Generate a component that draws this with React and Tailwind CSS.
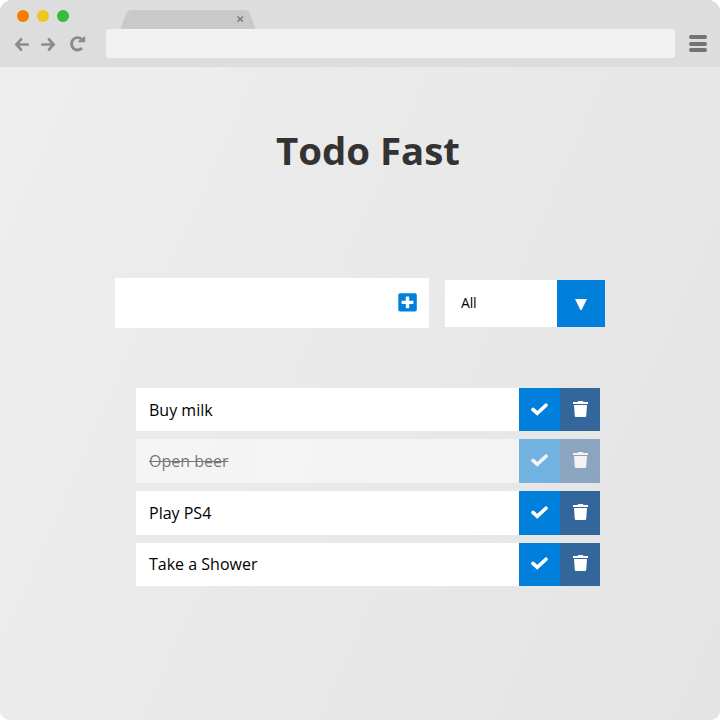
const todos = [
  { text: "Buy milk", done: false, height: "h-[43px] mb-2", nudge: "pb-px" },
  { text: "Open beer", done: true, height: "h-[44px] mb-2", nudge: "pb-[2px]" },
  { text: "Play PS4", done: false, height: "h-[44px] mb-2", nudge: "pb-[2px]" },
  { text: "Take a Shower", done: false, height: "h-[43px]", nudge: "pb-[3px]" },
];

function CheckIcon() {
  return (
    <svg className="h-[13px] w-[17px]" viewBox="0 0 17 13" fill="none">
      <path d="M2 6.400L6.200 10.400L15 2.200" stroke="#fff" strokeWidth="3.600" strokeLinecap="round" />
    </svg>
  );
}

function TrashIcon() {
  return (
    <svg className="h-4 w-[15px]" viewBox="0 0 15 16" fill="#fff">
      <path d="M0 1H4.500L5.300 0H9.700L10.500 1H15V3H0ZM1 4H14L13.200 15Q13.100 16 12.100 16H2.900Q1.900 16 1.800 15Z" />
    </svg>
  );
}

function PlusSquareIcon() {
  return (
    <svg className="h-[19px] w-[19px]" viewBox="0 0 19 19">
      <rect x="0.300" y="0.300" width="18.500" height="18.200" rx="1.800" fill="#007fdb" />
      <path d="M9.500 3.500V15.300M3.600 9.400H15.400" stroke="#fff" strokeWidth="3.400" />
    </svg>
  );
}

function BrowserBar() {
  return (
    <header className="h-[67px] bg-[#dddddd]">
      <div className="flex h-[29px]">
        <div className="flex w-[120px] gap-2 pl-[17px] pt-[10px]">
          <span className="size-3 rounded-full bg-[#f97c00]" />
          <span className="size-3 rounded-full bg-[#ecc81f]" />
          <span className="size-3 rounded-full bg-[#33bd38]" />
        </div>
        <svg className="mt-[10px] h-[19px] w-[136px]" viewBox="0 0 136 19">
          <path d="M0.500 19L5.500 5Q7.500 0 12 0H124Q128.500 0 130.500 5L135.500 19Z" fill="#c9c9c9" />
          <path d="M117.500 6.500L123 11.700M123 6.500L117.500 11.700" stroke="#7c7c7c" strokeWidth="1.500" fill="none" />
        </svg>
      </div>
      <div className="flex h-[29px] items-center">
        <div className="flex w-[106px] items-center pl-[14px]">
          <svg className="h-4 w-4" viewBox="0 0 16 16" fill="none" stroke="#8b8b8b" strokeWidth="2.700" strokeLinecap="round">
            <path d="M7 3.300L2.400 8.500L7 13.700M2.600 8.500H13.700" />
          </svg>
          <svg className="ml-[10px] h-4 w-4" viewBox="0 0 16 16" fill="none" stroke="#8b8b8b" strokeWidth="2.700" strokeLinecap="round">
            <path d="M9 3.300L13.600 8.500L9 13.700M13.400 8.500H2.300" />
          </svg>
          <svg className="ml-[13px] h-[17px] w-[17px]" viewBox="0 0 17 17" fill="none">
            <path d="M12.800 4.500A6 6.200 0 1 0 13 13" stroke="#8b8b8b" strokeWidth="2.900" />
            <path d="M16.200 1V7.200H9.500V5.800Z" fill="#8b8b8b" />
          </svg>
        </div>
        <div className="h-[29px] w-[569px] rounded-[3px] bg-[#f2f2f2]" />
        <div className="ml-[14px] flex w-[18px] flex-col gap-[2.500px]">
          <span className="h-1 rounded-[2px] bg-[#737373]" />
          <span className="h-1 rounded-[2px] bg-[#737373]" />
          <span className="h-1 rounded-[2px] bg-[#737373]" />
        </div>
      </div>
    </header>
  );
}

export default function App() {
  return (
    <div className="h-[720px] w-[720px] bg-white font-['Open_Sans',sans-serif]">
      <div className="h-full overflow-hidden rounded-t-[12px] rounded-b-[10px] bg-[#e8e8e8]">
        <BrowserBar />
        <main className="h-[653px] bg-[linear-gradient(114deg,#eeeeee,#e4e4e4)] pt-[55px]">
          <h1 className="h-[56px] pl-[16px] text-center text-[38.400px] leading-[56px] font-bold text-[#333]">Todo Fast</h1>
          <div className="mt-[100px] ml-[115px] flex items-center">
            <div className="flex h-[50px] w-[314px] items-center justify-end bg-white pr-[12px] pb-px">
              <PlusSquareIcon />
            </div>
            <div className="ml-4 flex h-[47px] w-[160px] bg-white">
              <div className="flex-1 pl-4 text-[14px] leading-[46px] tracking-[-0.200px] text-black">All</div>
              <div className="flex w-[48px] items-center justify-center bg-[#007fdb]">
                <svg className="mt-[2px] h-[11px] w-[12px]" viewBox="0 0 12 11" fill="#fff">
                  <path d="M0 0H12L6.600 11H5.400Z" />
                </svg>
              </div>
            </div>
          </div>
          <ul className="mt-[60px] ml-[136px] w-[464px]">
            {todos.map(({ text, done, height, nudge }) => (
              <li key={text} className={`flex ${height} ${done ? "opacity-50" : ""}`}>
                <div className={`flex flex-1 items-center bg-white pl-[13px] text-[16px] text-black ${text === "Take a Shower" ? "pb-[2px]" : ""} ${done ? "line-through" : ""}`}>{text}</div>
                <div className={`flex w-[41px] items-center justify-center bg-[#007fdb] ${nudge}`}>
                  <CheckIcon />
                </div>
                <div className={`flex w-[40px] items-center justify-center bg-[#33669b] pl-px ${nudge}`}>
                  <TrashIcon />
                </div>
              </li>
            ))}
          </ul>
        </main>
      </div>
    </div>
  );
}
